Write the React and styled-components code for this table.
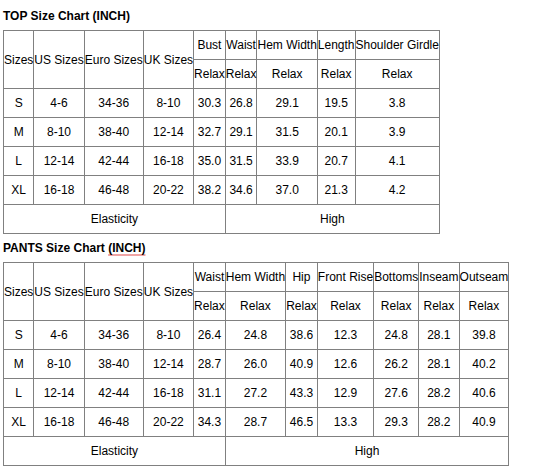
import React from "react";
import styled, { createGlobalStyle } from "styled-components";

const Global = createGlobalStyle`
  html, body { margin: 0; padding: 0; background: #fff; }
  body { font-family: "Liberation Sans", Arial, sans-serif; color: #000; }
`;

const Page = styled.div`
  padding: 2px 3px;
`;

const Title = styled.div`
  font-size: 12px;
  line-height: 14px;
  font-weight: bold;
  margin: 7px 0;
`;

const Squiggle = styled.span`
  text-decoration: underline;
  text-decoration-color: #f0a4a4;
  text-decoration-thickness: 2px;
  text-underline-offset: 2px;
`;

const Table = styled.table`
  border-collapse: collapse;
  font-size: 12px;
  line-height: 14px;
`;

const Cell = styled.td`
  border: 1px solid #808080;
  padding: 7px 0;
  text-align: center;
  vertical-align: middle;
  white-space: nowrap;
`;

const top = {
  title: "TOP Size Chart ",
  measures: ["Bust", "Waist", "Hem Width", "Length", "Shoulder Girdle"],
  rows: [
    ["S", "4-6", "34-36", "8-10", "30.3", "26.8", "29.1", "19.5", "3.8"],
    ["M", "8-10", "38-40", "12-14", "32.7", "29.1", "31.5", "20.1", "3.9"],
    ["L", "12-14", "42-44", "16-18", "35.0", "31.5", "33.9", "20.7", "4.1"],
    ["XL", "16-18", "46-48", "20-22", "38.2", "34.6", "37.0", "21.3", "4.2"],
  ],
};

const pants = {
  title: "PANTS Size Chart ",
  measures: ["Waist", "Hem Width", "Hip", "Front Rise", "Bottoms", "Inseam", "Outseam"],
  rows: [
    ["S", "4-6", "34-36", "8-10", "26.4", "24.8", "38.6", "12.3", "24.8", "28.1", "39.8"],
    ["M", "8-10", "38-40", "12-14", "28.7", "26.0", "40.9", "12.6", "26.2", "28.1", "40.2"],
    ["L", "12-14", "42-44", "16-18", "31.1", "27.2", "43.3", "12.9", "27.6", "28.2", "40.6"],
    ["XL", "16-18", "46-48", "20-22", "34.3", "28.7", "46.5", "13.3", "29.3", "28.2", "40.9"],
  ],
};

const sizeHeads = ["Sizes", "US Sizes", "Euro Sizes", "UK Sizes"];

function Chart({ data, squiggle }) {
  return (
    <>
      <Title>
        {data.title}
        {squiggle ? <Squiggle>(INCH)</Squiggle> : "(INCH)"}
      </Title>
      <Table>
        <tbody>
          <tr>
            {sizeHeads.map((h) => (
              <Cell key={h} rowSpan={2}>{h}</Cell>
            ))}
            {data.measures.map((m) => (
              <Cell key={m}>{m}</Cell>
            ))}
          </tr>
          <tr>
            {data.measures.map((m) => (
              <Cell key={m}>Relax</Cell>
            ))}
          </tr>
          {data.rows.map((r) => (
            <tr key={r[0]}>
              {r.map((v, i) => (
                <Cell key={i}>{v}</Cell>
              ))}
            </tr>
          ))}
          <tr>
            <Cell colSpan={5}>Elasticity</Cell>
            <Cell colSpan={data.measures.length - 1}>High</Cell>
          </tr>
        </tbody>
      </Table>
    </>
  );
}

export default function App() {
  return (
    <Page>
      <Global />
      <Chart data={top} />
      <Chart data={pants} squiggle />
    </Page>
  );
}
